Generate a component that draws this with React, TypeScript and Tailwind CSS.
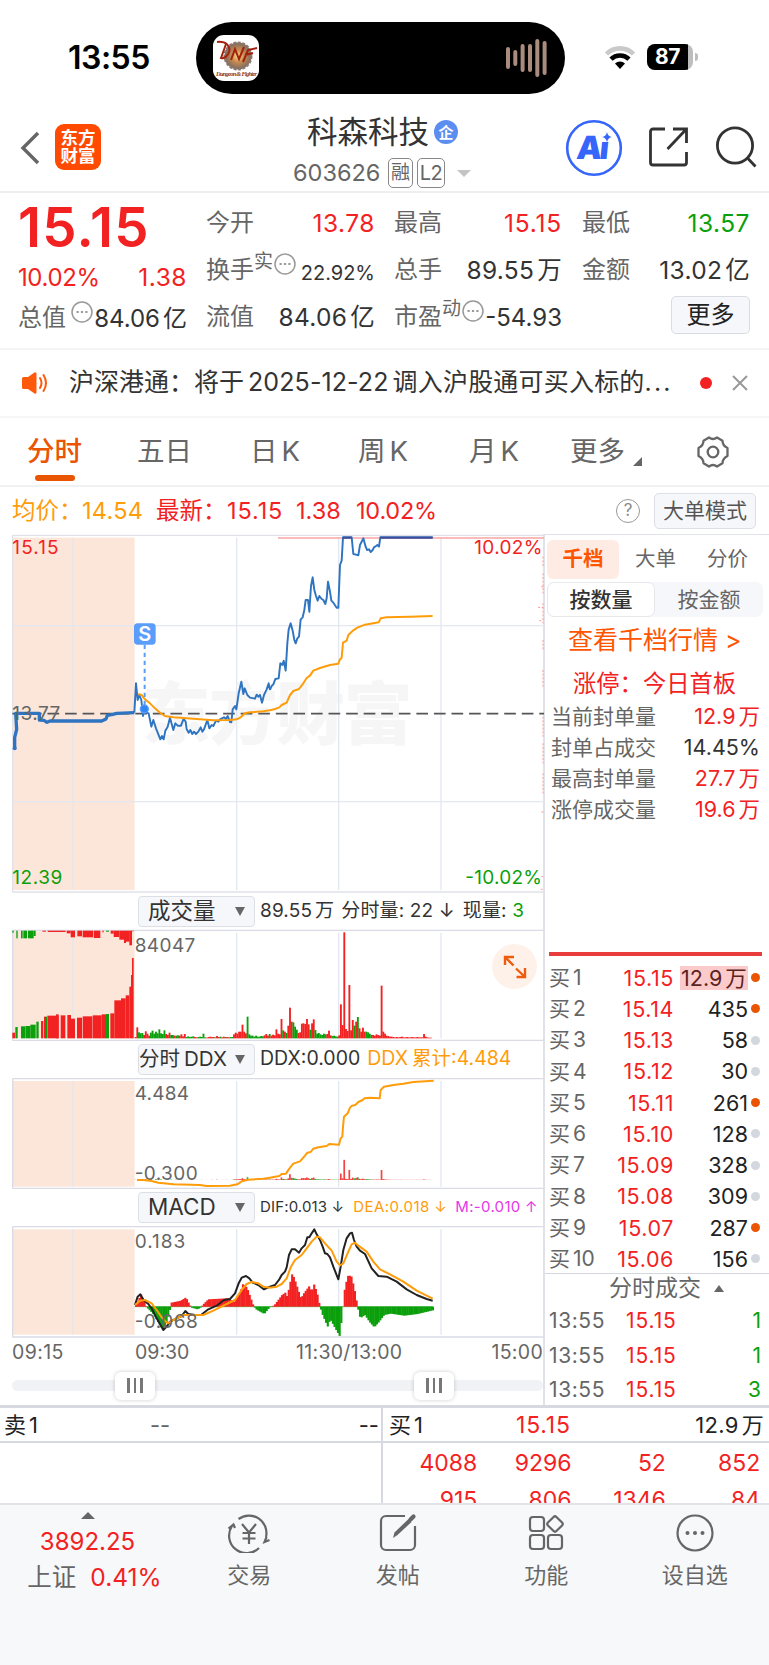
import React from "react";

// ——— Chart data, in @3x units ———
const PRE_LINE =
  "44,655 44,622 50,598 47,550 118,550 118,570 132,571 141,577 150,573 305,573 318,567 322,556 335,554 350,550 403,548";
const PRICE_A =
  "403,548 408,460 413,510 418,495 424,510 429,558 433,536 440,548 446,550 454,590 460,570 468,595 481,628 486,618 491,628 496,602 503,590 510,563 520,600 526,580 533,587 543,587 551,566 557,575 560,598 566,608 571,600 577,612 582,605 588,612 595,605 602,592 607,605 612,598 622,570 628,595 635,585 640,588 648,572 655,575 660,568 672,562 678,567 683,558 690,576 694,577 698,538 705,528 709,538 716,490 724,455 730,492 734,475 742,495 750,503 765,506 770,494 775,500 780,495 786,518 792,495 800,478 806,460 810,480";
const PRICE_B =
  "0,480 5,468 10,463 16,447 26,445 31,400 37,405 41,392 47,422 52,340 56,298 62,280 68,302 73,330 77,340 82,325 87,320 92,268 98,262 103,240 107,210 114,210 118,245 123,168 128,142 133,180 138,198 143,212 148,198 155,207 160,210 166,222 170,205 174,155 180,185 184,212 190,218 200,233 205,233 207,180 210,105 215,92 219,22 245,22 250,72 258,74 265,76 270,45 280,25 287,50 291,60 297,58 302,66 308,60 312,52 318,48 322,45 327,50 331,22 488,22";
const AVG_A =
  "415,492 425,495 432,505 440,512 450,520 465,535 480,548 495,558 520,562 560,565 600,568 640,571 690,570 710,568 722,562 735,550 750,547 790,544 810,541";
const AVG_B =
  "0,541 15,537 28,532 35,525 50,518 60,495 70,483 87,477 100,460 110,444 120,437 130,422 150,414 180,405 205,401 209,390 215,383 219,338 230,332 235,315 250,301 262,293 285,284 326,277 332,265 350,262 420,260 488,258";
const DDX_A =
  "411,870 430,870 455,873 475,878 520,883 600,885 620,888 690,887 712,883 725,874 745,869 790,866 810,863";
const DDX_B =
  "0,863 15,860 28,858 35,852 48,851 58,836 70,821 90,814 105,797 112,788 122,786 130,776 145,772 170,768 178,762 207,764 212,745 217,740 219,710 222,680 233,670 240,653 246,647 256,645 265,636 278,630 284,625 300,623 329,625 332,600 342,590 370,585 400,581 430,576 491,572";
const DIF_A =
  "405,375 413,350 421,343 430,360 445,372 455,385 470,415 490,450 500,440 510,425 530,415 545,408 556,393 565,402 585,405 603,405 625,388 650,377 672,360 690,357 705,340 716,310 725,293 738,288 748,295 758,308 775,315 792,328 805,322 810,320";
const DIF_B =
  "0,320 15,315 28,298 35,285 45,275 50,262 57,225 65,208 75,208 87,218 95,205 105,195 112,172 118,172 125,160 133,148 140,163 150,180 158,200 165,220 172,222 180,232 190,260 205,298 212,260 220,210 230,175 240,160 246,158 252,180 260,200 270,212 285,222 305,265 325,288 350,290 380,305 410,328 440,345 470,357 488,362";
const DEA_A =
  "405,375 420,362 435,360 455,370 470,390 485,412 503,430 520,420 550,405 580,405 610,405 640,392 680,372 705,360 725,330 740,312 755,306 775,310 790,320 810,323";
const DEA_B =
  "0,323 20,320 35,312 50,295 62,262 75,240 95,225 110,205 125,185 140,170 150,172 165,190 185,212 200,245 210,256 220,250 235,215 245,193 255,188 265,197 290,215 310,245 330,268 360,283 400,305 440,332 488,356";

// one entry per minute from 09:30: colour + height
const VOLUME =
  "r4 r33 g18 g15 g16 r10 r21 r14 r8 g17 g23 g14 g20 g15 g27 g15 g13 g24 r13 r10 r17 g10 g10 r8 g8 g9 r8 r12 r6 r13 g4 g6 g4 g5 g6 r4 r3 g4 g5 g4 g14 g3 r2 r4 r5 r4 r4 g3 r7 r4 g5 r3 r5 g4 r4 r3 g4 g4 r12 r17 r14 r20 r20 r41 r20 r15 g65 g12 g8 g8 g5 g8 g5 g5 g7 g6 r9 r13 r8 g13 r8 r11 r9 r27 r14 r12 r58 g24 r20 g16 r38 r92 r50 g48 g35 g26 r16 r18 r44 r45 r43 r58 r42 g26 r45 r57 g25 g14 g16 g12 g10 g14 g12 r13 r23 r9 g7 g8 g6 g5 r9 r102 r40 r318 r28 r22 r160 r24 r55 g38 r50 g64 r30 r20 r32 r20 g20 g18 g14 g10 r10 r8 r12 r10 r8 r158 r20 r14 r8 r7 r5 r5 r4 r3 r4 r3 r4 r5 r3 r3 r4 r3 r3 r4 r3 r3 r4 r3 r3 r3 r13 r5 r3 r2 r2";

const MACD_SHAPE: [number, number][] = [
  [405, 5], [421, 38], [434, 5], [438, -3], [455, -20], [486, -70], [498, -45], [508, -5], [511, 12], [540, 18],
  [555, 28], [566, 6], [572, -3], [590, -8], [600, -2], [605, 5], [622, 22], [680, 25], [700, 15], [718, 45],
  [726, 68], [738, 58], [758, 2], [765, -8], [790, -22], [806, -2], [820, 4], [843, 35], [853, 42], [859, 30],
  [866, 65], [874, 100], [882, 80], [900, 25], [910, 42], [925, 62], [932, 45], [940, 68], [950, 35], [957, 0],
  [965, -25], [980, -60], [988, -38], [1000, -60], [1016, -88], [1022, -40], [1026, 0], [1032, 60], [1042, 95],
  [1052, 90], [1062, 45], [1070, 0], [1076, -30], [1082, -32], [1092, -25], [1105, -45], [1120, -62], [1135, -45],
  [1150, -25], [1170, -21], [1210, -27], [1250, -22], [1300, -10],
];

const RED = "#f32222";
const GREEN = "#0b9f0b";
const STEP = 5.09;

function heightAt(x: number) {
  for (let i = 1; i < MACD_SHAPE.length; i++) {
    const [x0, h0] = MACD_SHAPE[i - 1];
    const [x1, h1] = MACD_SHAPE[i];
    if (x <= x1) return h0 + ((h1 - h0) * (x - x0)) / (x1 - x0);
  }
  return 0;
}

const volBars = VOLUME.split(" ").map((s, i) => ({
  x: 404 + i * STEP,
  h: Number(s.slice(1)),
  fill: s[0] === "r" ? RED : GREEN,
}));
const macdBars = Array.from({ length: 176 }, (_, i) => ({ x: 405 + i * STEP, h: heightAt(405 + i * STEP) }));

// call auction bars: [x, width, edge, colour]
const AUCTION_BOTTOM: [number, number, number, string][] = [
  [37, 8, 428, RED], [46, 7, 411, GREEN], [63, 12, 409, GREEN], [76, 15, 408, GREEN], [91, 16, 404, GREEN],
  [109, 7, 395, GREEN], [123, 7, 393, RED], [132, 6, 380, RED], [137, 4, 380, GREEN], [142, 34, 377, RED],
  [168, 8, 373, RED], [182, 14, 376, RED], [202, 11, 375, RED], [213, 12, 386, RED], [231, 15, 383, RED],
  [248, 29, 379, RED], [278, 27, 376, RED], [305, 13, 373, RED], [318, 9, 372, GREEN], [331, 12, 370, RED],
  [343, 20, 331, RED], [363, 14, 325, RED], [377, 11, 316, RED], [388, 5, 290, RED], [393, 3, 255, RED], [396, 5, 204, RED],
];
const AUCTION_TOP: [number, number, number, string][] = [
  [37, 4, 128, GREEN], [49, 4, 145, GREEN], [63, 5, 145, GREEN], [70, 11, 145, GREEN], [84, 17, 145, GREEN],
  [101, 6, 138, GREEN], [127, 11, 125, RED], [143, 54, 126, RED], [200, 12, 130, RED], [212, 13, 142, RED],
  [232, 14, 139, RED], [248, 32, 142, RED], [282, 19, 144, RED], [307, 4, 127, RED], [318, 9, 125, GREEN],
  [332, 9, 131, RED], [341, 17, 141, RED], [358, 14, 149, RED], [372, 6, 159, RED], [378, 11, 155, RED], [388, 8, 166, RED],
  [396, 5, 124, RED],
];

const BIDS: [string, string, string, boolean][] = [
  ["买1", "15.15", "12.9万", true],
  ["买2", "15.14", "435", true],
  ["买3", "15.13", "58", false],
  ["买4", "15.12", "30", false],
  ["买5", "15.11", "261", true],
  ["买6", "15.10", "128", false],
  ["买7", "15.09", "328", false],
  ["买8", "15.08", "309", false],
  ["买9", "15.07", "287", true],
  ["买10", "15.06", "156", false],
];

const LIMIT_ROWS: [string, string, string][] = [
  ["当前封单量", "12.9万", "text-[#f32222]"],
  ["封单占成交", "14.45%", "text-[#333]"],
  ["最高封单量", "27.7万", "text-[#f32222]"],
  ["涨停成交量", "19.6万", "text-[#f32222]"],
];

// puts a thin gap between latin digits and a chinese unit
function Num({ children }: { children: string }) {
  const m = children.match(/^([\d.]+)([万亿])$/);
  if (!m) return <>{children}</>;
  return (
    <>
      {m[1]}
      <span className="ml-[3px]">{m[2]}</span>
    </>
  );
}

function Tick({ x1, y1, y2 }: { x1: number; y1: number; y2: number }) {
  return <line x1={x1} x2={x1} y1={y1} y2={y2} stroke="#e3e7f0" strokeWidth="4" />;
}

function StatusBar() {
  return (
    <div className="flex h-[112px] items-start">
      <div className="mt-[38px] ml-[68px] w-[128px] text-[32px] leading-[40px] font-semibold tracking-[-0.5px] text-black">13:55</div>
      <div className="mt-[22px] flex h-[72px] w-[369px] items-center justify-between rounded-full bg-black pr-[17px] pl-[17px]">
        <svg width="46" height="46" viewBox="0 0 46 46">
          <defs>
            <radialGradient id="dnf">
              <stop offset="0" stopColor="#ffe08a" />
              <stop offset="0.45" stopColor="#c98c4e" />
              <stop offset="1" stopColor="#7c6a62" />
            </radialGradient>
          </defs>
          <rect width="46" height="46" rx="11" fill="#fff" />
          <circle cx="25" cy="21" r="13.5" fill="url(#dnf)" stroke="#8a7a72" strokeWidth="2" strokeDasharray="3 1.5" />
          <path d="M4 7c9-1 14 4 12 10-1 4-5 7-8 6l5-14M18 25l4-11 4 10 5-12M30 27l5-12 9-2M32 20l8-2" fill="none" stroke="#a3210f" strokeWidth="2" />
          <text x="3" y="40.5" textLength="41" fontSize="6.5" fontStyle="italic" fontWeight="700" fontFamily="Liberation Serif" fill="#8f3a26">
            Dungeon &amp; Fighter
          </text>
        </svg>
        <svg width="44" height="40" viewBox="0 0 44 40" stroke="#a98c7e" strokeWidth="4" strokeLinecap="round">
          <path d="M4 11v18M11.3 14v12M18.6 8v24M26 8v24M33.3 3v34M40.6 5v30" />
        </svg>
      </div>
      <svg className="mt-[45px] ml-[39px]" width="32" height="25" viewBox="0 0 32 25">
        <path d="M2.500 9a19 19 0 0 1 27 0" fill="none" stroke="#c9c9c9" strokeWidth="4.600" />
        <path d="M7 14.200a12.800 12.800 0 0 1 18 0" fill="none" stroke="#000" strokeWidth="4.600" />
        <path d="M16 24l-5-5.500a7.200 7.200 0 0 1 10 0z" fill="#000" />
      </svg>
      <div className="mt-[44px] ml-[11px] flex items-center">
        <div className="flex h-[26px] w-[46px] items-center overflow-hidden rounded-[8px] bg-[#bdbdbd]">
          <div className="h-[26px] w-[41px] bg-black text-center text-[21px] leading-[26px] font-bold tracking-tight text-white">87</div>
        </div>
        <div className="ml-[2px] h-[8px] w-[3px] rounded-r-full bg-[#bdbdbd]" />
      </div>
    </div>
  );
}

function Header() {
  return (
    <div className="flex h-[81px] items-start border-b-2 border-[#efefef]">
      <svg className="mt-[19px] ml-[19px]" width="22" height="34" viewBox="0 0 22 34" fill="none" stroke="#666" strokeWidth="3.400">
        <path d="M19 2L4 17l15 15" />
      </svg>
      <div className="mt-[12px] ml-[14px] flex size-[46px] flex-col items-center justify-center rounded-[9px] bg-[#ff4a02] text-[17.500px] leading-[18.500px] font-bold text-white">
        <span>东方</span>
        <span>财富</span>
      </div>
      <div className="ml-[192px] w-[272px]">
        <div className="mt-px flex items-center pl-[14px] text-[30.500px] leading-[38px] text-[#333]">
          科森科技
          <span className="ml-[5px] flex size-[24px] items-center justify-center rounded-full bg-[#5c8df0] text-[15px] leading-none font-bold text-white">企</span>
        </div>
        <div className="mt-[5px] flex items-center text-[23.500px] leading-[34px] text-[#666]">
          <span className="w-[95px]">603626</span>
          <span className="flex h-[30px] w-[25px] items-center justify-center rounded-[5px] border-[1.500px] border-[#888] text-[19px]">融</span>
          <span className="ml-[4px] flex h-[30px] w-[28px] items-center justify-center rounded-[5px] border-[1.500px] border-[#888] text-[20px] tracking-tight">L2</span>
          <span className="ml-[12px] border-x-[7px] border-t-[7px] border-x-transparent border-t-[#c4c4c4]" />
        </div>
      </div>
      <svg className="mt-[7px] shrink-0" width="58" height="58" viewBox="0 0 58 58">
        <circle cx="29" cy="29" r="26.800" fill="#fff" stroke="#3665fb" strokeWidth="2.600" />
        <text x="11" y="40" fontSize="32" fontWeight="900" fill="#3665fb" fontFamily="Inter" transform="skewX(-6) translate(4 0)">
          A
        </text>
        <text x="34" y="40" fontSize="31" fontWeight="900" fill="#3665fb" fontFamily="Inter" transform="skewX(-6) translate(4 0)">
          i
        </text>
        <rect x="35" y="12" width="12" height="10.500" fill="#fff" />
        <path d="M42 13q.8 4.300 5 5.100q-4.200.8-5 5.100q-.8-4.300-5-5.100q4.200-.8 5-5.100z" fill="#3665fb" />
      </svg>
      <svg className="mt-[14px] ml-[25px] shrink-0" width="42" height="42" viewBox="0 0 42 42" fill="none" stroke="#333" strokeWidth="2.800">
        <path d="M17 3H5a2.500 2.500 0 0 0-2.500 2.500v31A2.500 2.500 0 0 0 5 39h31a2.500 2.500 0 0 0 2.500-2.500V26M25 3h13.500v14M38 3.500L19.500 23" />
      </svg>
      <svg className="mt-[14px] ml-[25px] shrink-0" width="42" height="42" viewBox="0 0 42 42" fill="none" stroke="#333" strokeWidth="2.800">
        <circle cx="20" cy="19.500" r="17.600" />
        <path d="M32 31.500l8.500 9" />
      </svg>
    </div>
  );
}

function More() {
  return (
    <svg width="22" height="22" viewBox="0 0 22 22" fill="none" stroke="#999" strokeWidth="1.500">
      <circle cx="11" cy="11" r="10" />
      <path d="M5.500 11h2.200M9.900 11h2.200M14.300 11h2.200" strokeWidth="2.200" />
    </svg>
  );
}

function Cell({ label, sup, more, value, cls }: { label: string; sup?: string; more?: boolean; value: string; cls?: string }) {
  return (
    <div className="flex h-[47px] items-center justify-between whitespace-nowrap">
      <span className="flex items-center text-[24px] text-[#666]">
        {label}
        {sup && <span className="-mt-[14px] text-[19px]">{sup}</span>}
        {more && <span className={"-mt-[12px] " + (sup ? "ml-[1px]" : "ml-[5px]")}><More /></span>}
      </span>
      <span className={"mt-[2px] " + (cls || "text-[24.500px] tracking-[0.300px] text-[#333]")}>
        <Num>{value}</Num>
      </span>
    </div>
  );
}

function Quote() {
  return (
    <div className="flex h-[157px] border-b-2 border-[#f3f4f6] pl-[18px]">
      <div className="w-[169px]">
        <div className="mt-[5px] h-[56px] text-[54.500px] leading-[58px] font-semibold tracking-[1.200px] text-[#f32222]">15.15</div>
        <div className="mt-[7px] flex h-[33px] items-center justify-between text-[24.500px] text-[#f32222]">
          <span className="text-[24px] tracking-[-0.400px]">10.02%</span>
          <span className="tracking-[0.500px]">1.38</span>
        </div>
        <Cell label="总值" more value="84.06亿" cls="text-[24px] text-[#333]" />
      </div>
      <div className="ml-[19px] w-[169px] pt-[6px]">
        <Cell label="今开" value="13.78" cls="text-[24.500px] tracking-[0.500px] text-[#f32222]" />
        <Cell label="换手" sup="实" more value="22.92%" cls="text-[20px] text-[#333] pt-[5px]" />
        <Cell label="流值" value="84.06亿" />
      </div>
      <div className="ml-[19px] w-[168px] pt-[6px]">
        <Cell label="最高" value="15.15" cls="text-[24.500px] tracking-[0.800px] text-[#f32222]" />
        <Cell label="总手" value="89.55万" />
        <Cell label="市盈" sup="动" more value="-54.93" cls="text-[24px] text-[#333]" />
      </div>
      <div className="ml-[20px] w-[168px] pt-[6px]">
        <Cell label="最低" value="13.57" cls="text-[24.500px] tracking-[0.500px] text-[#0b9f0b]" />
        <Cell label="金额" value="13.02亿" />
        <div className="mt-[3px] ml-auto flex h-[38px] w-[79px] items-center justify-center rounded-[5px] border-[1.500px] border-[#d9dce3] bg-[#f6f7fa] text-[24px] text-[#222]">
          更多
        </div>
      </div>
    </div>
  );
}

function Notice() {
  return (
    <div className="flex h-[68px] items-center border-b-2 border-[#f6f6f6] pl-[21px] whitespace-nowrap">
      <svg width="28" height="24" viewBox="0 0 28 24">
        <path d="M1 7.500Q1 6 2.500 6H7l6.500-4.500Q15.500.5 15.500 3v18q0 2.500-2 1.500L7 18H2.500Q1 18 1 16.500z" fill="#ff5a0a" />
        <path d="M19 7q3 5 0 10M22.500 4q5 8 0 16" fill="none" stroke="#ff5a0a" strokeWidth="2" strokeLinecap="round" />
      </svg>
      <div className="ml-[20px] w-[628px] text-[25px] text-[#333]">
        沪深港通：将于<span className="mx-[4px] tracking-[0.100px]">2025-12-22</span>
        <span className="tracking-[0.200px]">调入沪股通可买入标的</span>
        <span className="tracking-[2.200px]">...</span>
      </div>
      <div className="ml-[3px] size-[12px] rounded-full bg-[#f32222]" />
      <svg className="ml-[20px]" width="16" height="16" viewBox="0 0 16 16" stroke="#999" strokeWidth="2">
        <path d="M1 1l14 14M15 1L1 15" />
      </svg>
    </div>
  );
}

function Tabs() {
  return (
    <div className="flex h-[69px] items-center border-b-2 border-[#f0f1f3] pl-[27px] text-[27.500px] whitespace-nowrap text-[#666]">
      <div className="flex h-full w-[110px] flex-col pt-[14px] font-medium text-[#ea5504]">
        <span className="leading-[38px]">分时</span>
        <span className="mt-[5px] ml-[8px] h-[6px] w-[40px] rounded-full bg-[#ea5504]" />
      </div>
      <span className="w-[113px]">五日</span>
      <span className="w-[108px]">日<span className="ml-[4px]">K</span></span>
      <span className="w-[111px]">周<span className="ml-[4px]">K</span></span>
      <span className="w-[101px]">月<span className="ml-[4px]">K</span></span>
      <span className="w-[63px]">更多</span>
      <span className="mt-[20px] border-b-[9px] border-l-[9px] border-b-[#666] border-l-transparent" />
      <svg className="ml-[54px]" width="34" height="32" viewBox="0 0 34 32" fill="none" stroke="#666" strokeWidth="2.300">
        <path d="M13 1.500Q17 4.500 21 1.500L26.500 4.700Q26.500 9.500 31.500 12V20Q26.500 22.500 26.500 27.300L21 30.500Q17 27.500 13 30.500L7.500 27.300Q7.500 22.500 2.500 20V12Q7.500 9.500 7.500 4.700z" strokeLinejoin="round" />
        <circle cx="17" cy="16" r="5.300" />
      </svg>
    </div>
  );
}

function InfoRow() {
  return (
    <div className="flex h-[47px] items-center pl-[12px] text-[23.500px] whitespace-nowrap text-[#f32222]">
      <span className="w-[70px] text-[#ff9c0a]">均价：</span>
      <span className="w-[74px] tracking-[0.300px] text-[#ff9c0a]">14.54</span>
      <span className="w-[71px]">最新：</span>
      <span className="w-[69px] tracking-[0.900px]">15.15</span>
      <span className="w-[60px]">1.38</span>
      <span className="w-[260px] tracking-[-0.200px]">10.02%</span>
      <span className="flex size-[24px] items-center justify-center rounded-full border-[1.500px] border-[#999] text-[17px] text-[#888]">?</span>
      <span className="ml-[14px] flex h-[36px] w-[102px] items-center justify-center rounded-[5px] border-[1.500px] border-[#dcdfe6] bg-[#f6f7fa] text-[21px] text-[#555]">
        大单模式
      </span>
    </div>
  );
}

function PriceChart() {
  return (
    <svg className="block" width="544" height="359" viewBox="0 12 1632 1077" fontFamily="Inter">
      <rect x="37" y="23" width="367" height="1057" fill="#fce6da" />
      <text x="425" y="628" fontSize="206" fontWeight="900" fill="#f6f6f7" textLength="812" fontFamily="Noto Sans CJK SC">
        东方财富
      </text>
      <Tick x1={219} y1={23} y2={1080} />
      <Tick x1={710} y1={23} y2={1080} />
      <Tick x1={1016} y1={23} y2={1080} />
      <Tick x1={1323} y1={23} y2={1080} />
      <path d="M37 287H1632M37 815H1632" stroke="#e3e7f0" strokeWidth="4" />
      <path d="M37 16H1632M37 1086H1632M38 16V1086" stroke="#e0e2e8" strokeWidth="4" />
      <path d="M37 551H1632" stroke="#555" strokeWidth="5" strokeDasharray="35 17.700" />
      <path d="M1629 80v30M1629 130v60M1624 170h8M1614 232h16M1629 220v60M1618 272h12M1629 330v30M1629 420v50M1629 560v60M1629 640v60M1629 730v60M1624 846h8M1624 1040h8M1622 1078h10" stroke="#f99" strokeWidth="3" strokeDasharray="6 5" />
      <path d="M834 24H1632" stroke="#fba3a3" strokeWidth="5" />
      <g fill="none" strokeLinejoin="round">
        <polyline points={PRE_LINE} stroke="#2f74c0" strokeWidth="10" />
        <circle cx="44" cy="655" r="6" fill="#2f74c0" />
        <polyline points={PRICE_A} stroke="#2f74c0" strokeWidth="5.800" />
        <polyline points={PRICE_B} stroke="#2f74c0" strokeWidth="5.800" transform="translate(810 0)" />
        <polyline points={AVG_A} stroke="#ff9c0a" strokeWidth="6" />
        <polyline points={AVG_B} stroke="#ff9c0a" strokeWidth="6" transform="translate(810 0)" />
        <path d="M1029 23h26M1141 23h157" stroke="#414b97" strokeWidth="6" />
      </g>
      <path d="M434 344V530" stroke="#5a9dfb" strokeWidth="6" strokeDasharray="13 11" />
      <circle cx="433" cy="537" r="12" fill="#2f86f6" stroke="#5a9dfb" strokeWidth="4" />
      <rect x="402" y="280" width="65" height="64" rx="11" fill="#5a9dfb" />
      <text x="434" y="333" fontSize="60" fontWeight="600" fill="#fff" textAnchor="middle">S</text>
      <g fontSize="57">
        <text x="37" y="73" fill={RED} textLength="139">15.15</text>
        <text x="37" y="569" fill="#666" textLength="144">13.77</text>
        <text x="37" y="1063" fill={GREEN} textLength="150">12.39</text>
        <text x="1423" y="73" fill={RED} textLength="204">10.02%</text>
        <text x="1396" y="1063" fill={GREEN} textLength="230">-10.02%</text>
      </g>
    </svg>
  );
}

function IndicatorBar({ name, pad, children }: { name: React.ReactNode; pad?: string; children: React.ReactNode }) {
  return (
    <div className="flex h-[36px] items-center pl-[138px] whitespace-nowrap">
      <div className={"flex h-[31px] w-[117px] shrink-0 items-center justify-between rounded-[4px] border-[1.500px] border-[#dcdfe6] bg-[#f6f7fa] pr-[9px] text-[#333] " + (pad || "pl-[9px] text-[22.500px]")}>
        <span>{name}</span>
        <span className="border-x-[5px] border-t-[9px] border-x-transparent border-t-[#666]" />
      </div>
      {children}
    </div>
  );
}

function VolumeChart() {
  return (
    <div className="relative">
      <svg className="block" width="544" height="112" viewBox="0 117 1632 336" fontFamily="Inter">
        <rect x="37" y="124" width="367" height="321" fill="#fce6da" />
        <Tick x1={219} y1={128} y2={445} />
        <Tick x1={710} y1={128} y2={445} />
        <Tick x1={1016} y1={128} y2={445} />
        <Tick x1={1323} y1={128} y2={445} />
        <path d="M37 121H1632M37 451H1632M38 121V451" stroke="#d9dce6" strokeWidth="4" />
        {AUCTION_BOTTOM.map(([x, w, y, c]) => (
          <rect key={x} x={x} y={y} width={w} height={445 - y} fill={c} />
        ))}
        {AUCTION_TOP.map(([x, w, y, c]) => (
          <rect key={x} x={x} y={122} width={w} height={y - 122} fill={c} />
        ))}
        {volBars.map((b) => (
          <rect key={b.x} x={b.x} y={445 - b.h} width={5.6} height={b.h} fill={b.fill} />
        ))}
        <text x="404" y="185" fontSize="57" fill="#666" textLength="182">84047</text>
      </svg>
      <div className="absolute top-[15px] left-[492px] flex size-[45px] items-center justify-center rounded-full bg-[#fef1ea]">
        <svg width="24" height="24" viewBox="0 0 24 24" fill="none" stroke="#ee5d0e" strokeWidth="2.400">
          <path d="M2 10V2h9M2.500 2.500l8 8M22 13v9h-8.500M21.500 21.500l-8.500-8" />
        </svg>
      </div>
    </div>
  );
}

function DdxChart() {
  return (
    <svg className="block" width="544" height="112" viewBox="0 561 1632 336" fontFamily="Inter">
      <rect x="37" y="573" width="367" height="317" fill="#fce6da" />
      <Tick x1={219} y1={573} y2={890} />
      <Tick x1={710} y1={573} y2={890} />
      <Tick x1={1016} y1={573} y2={890} />
      <Tick x1={1323} y1={573} y2={890} />
      <path d="M37 566H1632M37 895H1632M38 566V895" stroke="#d9dce6" strokeWidth="4" />
      {volBars.map((b, i) => {
        const h = b.h * (b.h > 90 ? 0.19 : 0.13);
        if (i < 58 && i % 3) return null;
        return <rect key={b.x} x={b.x} y={870 - h} width={5.1} height={h} fill={b.fill} opacity={0.85} />;
      })}
      <g fontSize="57" fill="#666">
        <text x="404" y="630" textLength="163">4.484</text>
        <text x="404" y="869" textLength="189">-0.300</text>
      </g>
      <g fill="none" stroke="#ff9c0a" strokeWidth="6" strokeLinejoin="round">
        <polyline points={DDX_A} />
        <polyline points={DDX_B} transform="translate(810 0)" />
      </g>
    </svg>
  );
}

function MacdChart() {
  return (
    <svg className="block" width="544" height="113" viewBox="0 135 1632 339" fontFamily="Inter">
      <rect x="37" y="148" width="367" height="316" fill="#fce6da" />
      <Tick x1={219} y1={148} y2={464} />
      <Tick x1={710} y1={148} y2={464} />
      <Tick x1={1016} y1={148} y2={464} />
      <Tick x1={1323} y1={148} y2={464} />
      <path d="M37 140H1632M37 471H1632M38 140V471" stroke="#d9dce6" strokeWidth="4" />
      <path d="M404 380H1298" stroke={GREEN} strokeWidth="2" />
      {macdBars.map(({ x, h }) => (
        <rect key={x} x={x} y={h > 0 ? 380 - h : 380} width={6.4} height={Math.abs(h)} fill={h > 0 ? RED : GREEN} />
      ))}
      <g fill="none" strokeWidth="6" strokeLinejoin="round">
        <polyline points={DIF_A} stroke="#222" />
        <polyline points={DIF_B} stroke="#222" transform="translate(810 0)" />
        <polyline points={DEA_A} stroke="#ff9c0a" />
        <polyline points={DEA_B} stroke="#ff9c0a" transform="translate(810 0)" />
      </g>
      <g fontSize="57" fill="#666">
        <text x="404" y="205" textLength="152">0.183</text>
        <text x="404" y="445" textLength="189">-0.068</text>
      </g>
    </svg>
  );
}

function Handle() {
  return (
    <div className="flex h-[28px] w-[40px] items-center justify-center gap-[4px] rounded-[6px] bg-white shadow-[0_0_4px_rgba(0,0,0,0.2)]">
      <i className="h-[15px] w-[2.500px] bg-[#777]" />
      <i className="h-[15px] w-[2.500px] bg-[#777]" />
      <i className="h-[15px] w-[2.500px] bg-[#777]" />
    </div>
  );
}

function ChartColumn() {
  return (
    <div className="w-[545px] border-r-2 border-[#e0e2e8]">
      <PriceChart />
      <IndicatorBar name="成交量">
        <span className="ml-[5px] text-[19px] tracking-[0.150px] text-[#333]">
          89.55<span className="ml-[3px]">万</span>
          <span className="ml-[7px]">分时量: 22 ↓</span>
          <span className="ml-[8px]">现量: </span>
          <span className="text-[#0b9f0b]">3</span>
        </span>
      </IndicatorBar>
      <VolumeChart />
      <IndicatorBar name={<>分时<span className="ml-[4px]">DDX</span></>} pad="text-[20.500px]">
        <span className="ml-[5px] text-[19.500px] text-[#333]">
          DDX:0.000<span className="ml-[7px] text-[#ff9c0a]">DDX<span className="ml-[4px]">累计:4.484</span></span>
        </span>
      </IndicatorBar>
      <DdxChart />
      <IndicatorBar name="MACD">
        <span className="ml-[5px] text-[15px] tracking-[0.150px] text-[#333]">DIF:0.013 ↓</span>
        <span className="ml-[9px] text-[15px] tracking-[0.450px] text-[#ff9c0a]">DEA:0.018 ↓</span>
        <span className="ml-[8px] text-[15px] tracking-[0.300px] text-[#e637e6]">M:-0.010 ↑</span>
      </IndicatorBar>
      <MacdChart />
      <div className="flex h-[30px] items-center pl-[12px] text-[19.500px] text-[#666]">
        <span className="w-[123px] tracking-[0.400px]">09:15</span>
        <span className="w-[161px]">09:30</span>
        <span className="flex-1 tracking-[0.300px]">11:30/13:00</span>
        <span className="tracking-[0.300px]">15:00</span>
      </div>
      <div className="flex h-[38px] items-center pb-[3px] pl-[12px]">
        <div className="flex h-[11px] w-full items-center rounded-full bg-[#f1f2f5] pl-[103px]">
          <Handle />
          <div className="w-[259px]" />
          <Handle />
        </div>
      </div>
    </div>
  );
}

function OrderBook() {
  return (
    <div className="w-[224px] border-t-[1.500px] border-[#e0e2e8] text-[#666]">
      <div className="mt-[5px] ml-[2px] flex text-[20.500px]">
        <span className="flex h-[39px] w-[72px] items-center justify-center rounded-[6px] bg-[#feece4] font-semibold text-[#ff5500]">千档</span>
        <span className="flex h-[39px] w-[73px] items-center justify-center">大单</span>
        <span className="flex h-[39px] w-[71px] items-center justify-center">分价</span>
      </div>
      <div className="mt-[3px] ml-[2px] flex h-[35px] w-[216px] rounded-[7px] bg-[#f6f7fa] text-[21px]">
        <span className="flex w-[108px] items-center justify-center rounded-[7px] border-[1.500px] border-[#e6e8ec] bg-white font-medium text-[#333]">按数量</span>
        <span className="flex w-[108px] items-center justify-center">按金额</span>
      </div>
      <div className="mt-[5px] pl-[23px] text-[25px] leading-[36px] whitespace-nowrap text-[#ff5500]">
        查看千档行情<span className="ml-[7px]">&gt;</span>
      </div>
      <div className="mt-[9px] pl-[28px] text-[23.300px] leading-[34px] whitespace-nowrap text-[#f32222]">涨停：今日首板</div>
      <div className="pr-[9px] pl-[6px]">
        {LIMIT_ROWS.map(([label, value, cls]) => (
          <div key={label} className="flex h-[31px] items-center justify-between">
            <span className="text-[21px]">{label}</span>
            <span className={"text-[21.500px] " + cls}>
              <Num>{value}</Num>
            </span>
          </div>
        ))}
      </div>
      <div className="mt-[127px] ml-[4px] h-[4px] w-[213px] bg-[#e93c3c]" />
      <div className="mt-[6px] h-[312px] border-b-[1.500px] border-[#d4d7de] pr-[8px] pl-[4px]">
        {BIDS.map(([label, price, amount, hot], i) => (
          <div key={label} className="flex h-[31.260px] items-center text-[21px]">
            <span className="w-[50px] whitespace-nowrap">
              {label[0]}
              <span className="ml-[3px]">{label.slice(1)}</span>
            </span>
            <span className="w-[75px] text-right text-[21.500px] tracking-[0.600px] text-[#f32222]">{price}</span>
            <span className="flex w-[74px] justify-end text-[21.500px] text-[#222]">
              <span className={i === 0 ? "h-[24px] w-[68px] bg-[#fbcaca] text-center leading-[24px] text-[#5b2222]" : ""}>
                <Num>{amount}</Num>
              </span>
            </span>
            <span className={"ml-[3px] size-[9px] rounded-full " + (hot ? "bg-[#ea5504]" : "bg-[#d3d7de]")} />
          </div>
        ))}
      </div>
      <div className="flex h-[28px] items-center pl-[64px] text-[23px]">
        分时成交
        <span className="ml-[13px] border-x-[5px] border-b-[7px] border-x-transparent border-b-[#666]" />
      </div>
      <div className="mt-[2px]">
        {["1", "1", "3"].map((n, i) => (
          <div key={i} className="flex h-[34.300px] items-center pr-[8px] pl-[4px] text-[21px]">
            <span className="w-[77px] tracking-[0.600px]">13:55</span>
            <span className="w-[60px] tracking-[0.900px] text-[#f32222]">15.15</span>
            <span className="flex-1 text-right text-[#0b9f0b]">{n}</span>
          </div>
        ))}
      </div>
    </div>
  );
}

function Level2() {
  const rows = [
    ["4088", "9296", "52", "852"],
    ["915", "806", "1346", "84"],
  ];
  return (
    <div className="h-[98px] overflow-hidden border-t-[3px] border-[#d6d9df] text-[22px] text-[#222]">
      <div className="flex h-[35px] items-center border-b-2 border-[#d6d9df] whitespace-nowrap">
        <div className="flex h-full w-[383px] items-center border-r-2 border-[#d6d9df] pt-[2px] pl-[4px]">
          <span className="w-[146px]">卖<span className="ml-[3px]">1</span></span>
          <span className="flex-1 text-[#666]">--</span>
          <span className="pr-[2px]">--</span>
        </div>
        <span className="w-[133px] pt-[2px] pl-[6px]">买<span className="ml-[3px]">1</span></span>
        <span className="flex-1 pt-[2px] text-[23px] tracking-[0.800px] text-[#f32222]">15.15</span>
        <span className="pt-[2px] pr-[5px] tracking-[0.300px]"><Num>12.9万</Num></span>
      </div>
      <div className="ml-[381px] border-l-2 border-[#d6d9df] pt-[2px]">
        {rows.map((r) => (
          <div key={r[0]} className="flex h-[37px] items-center text-right text-[23px] text-[#f32222]">
            {r.map((c) => (
              <span key={c} className="w-[94.300px]">{c}</span>
            ))}
          </div>
        ))}
      </div>
    </div>
  );
}

function BottomBar() {
  const item = "flex w-[148.500px] flex-col items-center pt-[8px]";
  const label = "mt-[5px] text-[22px] leading-[34px]";
  return (
    <div className="flex h-[162px] border-t-2 border-[#e2e3e8] bg-[#f7f8fa] text-[#666]">
      <div className="flex w-[175px] flex-col items-center pt-[7px]">
        <span className="border-x-[7px] border-b-[7px] border-x-transparent border-b-[#666]" />
        <span className="mt-[5px] text-[24px] leading-[36px] text-[#f32222]">3892.25</span>
        <span className="flex pl-[14px] text-[24.500px] leading-[34px] whitespace-nowrap">
          上证<span className="ml-[14px] text-[#f32222]">0.41%</span>
        </span>
      </div>
      <div className={item}>
        <svg width="44" height="40" viewBox="0 0 44 40" fill="none" stroke="#666" strokeWidth="2.200">
          <path d="M11.500 6A17.500 17.500 0 0 1 39 24M32 35A17.500 17.500 0 0 1 5 13M1.500 15.500L6.500 11.500 8 15M42.500 27l-5 2 2-5" />
          <path d="M15 11l7 8.500 7-8.500M22 19.500V31M15.500 20h13M15.500 25.500h13" />
        </svg>
        <span className={label}>交易</span>
      </div>
      <div className={item}>
        <svg width="40" height="40" viewBox="0 0 40 40" fill="none" stroke="#666" strokeWidth="2.200">
          <path d="M27 3H8a5 5 0 0 0-5 5v24a5 5 0 0 0 5 5h24a5 5 0 0 0 5-5V13" />
          <path d="M15 25l1.500-5.500L30.500 6l3 3L19.500 22z" fill="#666" stroke="none" />
          <path d="M32.500 6.500l3-3" strokeWidth="4.200" strokeLinecap="round" />
        </svg>
        <span className={label}>发帖</span>
      </div>
      <div className={item}>
        <svg width="38" height="40" viewBox="0 0 38 40" fill="none" stroke="#666" strokeWidth="2.200">
          <rect x="3" y="4" width="14" height="14" rx="3" />
          <rect x="3" y="22" width="14" height="14" rx="3" />
          <rect x="21" y="22" width="14" height="14" rx="3" />
          <rect x="22" y="5" width="12" height="12" rx="2" transform="rotate(45 28 11)" />
        </svg>
        <span className={label}>功能</span>
      </div>
      <div className={item}>
        <svg width="40" height="40" viewBox="0 0 40 40" fill="none" stroke="#666" strokeWidth="2.200">
          <circle cx="20" cy="20" r="17.500" />
          <g fill="#666" stroke="none">
            <circle cx="12.500" cy="20" r="2" />
            <circle cx="20" cy="20" r="2" />
            <circle cx="27.500" cy="20" r="2" />
          </g>
        </svg>
        <span className={label}>设自选</span>
      </div>
    </div>
  );
}

export default function App() {
  return (
    <div className="h-[1665px] w-[769px] overflow-hidden bg-white font-[Inter,'Noto_Sans_CJK_SC',sans-serif]">
      <StatusBar />
      <Header />
      <Quote />
      <Notice />
      <Tabs />
      <InfoRow />
      <div className="flex h-[871px]">
        <ChartColumn />
        <OrderBook />
      </div>
      <Level2 />
      <BottomBar />
    </div>
  );
}
